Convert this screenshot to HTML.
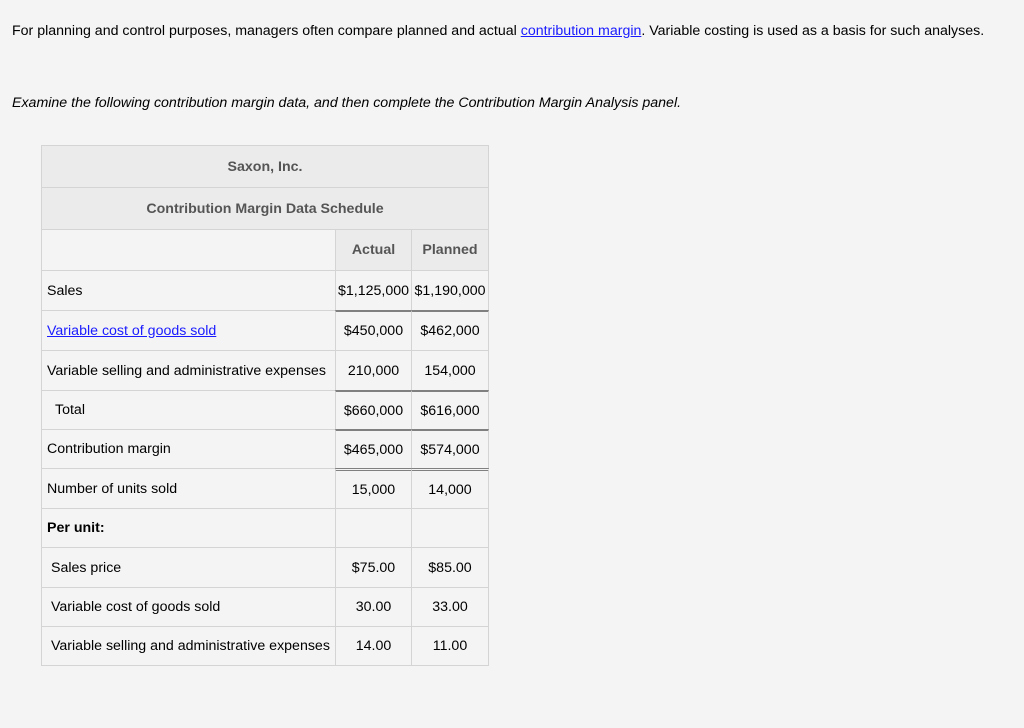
<!DOCTYPE html>
<html><head><meta charset="utf-8"><style>
body{margin:0;width:1024px;height:728px;background:#f3f4f3;font-family:"Liberation Sans",Arial,sans-serif;font-size:14.2px;color:#000;position:relative;overflow:hidden}
.t{position:absolute;white-space:nowrap}
a{color:#1a1aff;text-decoration:underline}
.c{position:absolute;box-sizing:border-box;border:1px solid #d4d4d4;display:flex;align-items:center;white-space:nowrap;overflow:visible}
.h{background:#ebebeb;font-weight:bold;color:#555;justify-content:center}
.n{justify-content:center}
.thick{border-top:2px solid #808080}
.dbl{border-top:3px double #808080}
</style></head><body>
<div class="t" style="left:12px;top:23px">For planning and control purposes, managers often compare planned and actual <a>contribution margin</a>. Variable costing is used as a basis for such analyses.</div>
<div class="t" style="left:12px;top:95px;font-style:italic">Examine the following contribution margin data, and then complete the Contribution Margin Analysis panel.</div>

<div class="c h" style="left:41px;top:145px;width:448px;height:43px">Saxon, Inc.</div>
<div class="c h" style="left:41px;top:187px;width:448px;height:43px">Contribution Margin Data Schedule</div>
<div class="c" style="left:41px;top:229px;width:295px;height:42px"></div>
<div class="c h" style="left:335px;top:229px;width:77px;height:42px">Actual</div>
<div class="c h" style="left:411px;top:229px;width:78px;height:42px">Planned</div>

<div class="c" style="left:41px;top:270px;width:295px;height:41px;padding-left:5px">Sales</div>
<div class="c n" style="left:335px;top:270px;width:77px;height:41px">$1,125,000</div>
<div class="c n" style="left:411px;top:270px;width:78px;height:41px">$1,190,000</div>

<div class="c" style="left:41px;top:310px;width:295px;height:41px;padding-left:5px"><a>Variable cost of goods sold</a></div>
<div class="c n thick" style="left:335px;top:310px;width:77px;height:41px">$450,000</div>
<div class="c n thick" style="left:411px;top:310px;width:78px;height:41px">$462,000</div>

<div class="c" style="left:41px;top:350px;width:295px;height:41px;padding-left:5px">Variable selling and administrative expenses</div>
<div class="c n" style="left:335px;top:350px;width:77px;height:41px">210,000</div>
<div class="c n" style="left:411px;top:350px;width:78px;height:41px">154,000</div>

<div class="c" style="left:41px;top:390px;width:295px;height:40px;padding-left:13px">Total</div>
<div class="c n thick" style="left:335px;top:390px;width:77px;height:40px">$660,000</div>
<div class="c n thick" style="left:411px;top:390px;width:78px;height:40px">$616,000</div>

<div class="c" style="left:41px;top:429px;width:295px;height:40px;padding-left:5px">Contribution margin</div>
<div class="c n thick" style="left:335px;top:429px;width:77px;height:40px">$465,000</div>
<div class="c n thick" style="left:411px;top:429px;width:78px;height:40px">$574,000</div>

<div class="c" style="left:41px;top:468px;width:295px;height:41px;padding-left:5px">Number of units sold</div>
<div class="c n dbl" style="left:335px;top:468px;width:77px;height:41px">15,000</div>
<div class="c n dbl" style="left:411px;top:468px;width:78px;height:41px">14,000</div>

<div class="c" style="left:41px;top:508px;width:295px;height:40px;padding-left:5px;font-weight:bold">Per unit:</div>
<div class="c n" style="left:335px;top:508px;width:77px;height:40px"></div>
<div class="c n" style="left:411px;top:508px;width:78px;height:40px"></div>

<div class="c" style="left:41px;top:547px;width:295px;height:41px;padding-left:9px">Sales price</div>
<div class="c n" style="left:335px;top:547px;width:77px;height:41px">$75.00</div>
<div class="c n" style="left:411px;top:547px;width:78px;height:41px">$85.00</div>

<div class="c" style="left:41px;top:587px;width:295px;height:40px;padding-left:9px">Variable cost of goods sold</div>
<div class="c n" style="left:335px;top:587px;width:77px;height:40px">30.00</div>
<div class="c n" style="left:411px;top:587px;width:78px;height:40px">33.00</div>

<div class="c" style="left:41px;top:626px;width:295px;height:40px;padding-left:9px">Variable selling and administrative expenses</div>
<div class="c n" style="left:335px;top:626px;width:77px;height:40px">14.00</div>
<div class="c n" style="left:411px;top:626px;width:78px;height:40px">11.00</div>
</body></html>
